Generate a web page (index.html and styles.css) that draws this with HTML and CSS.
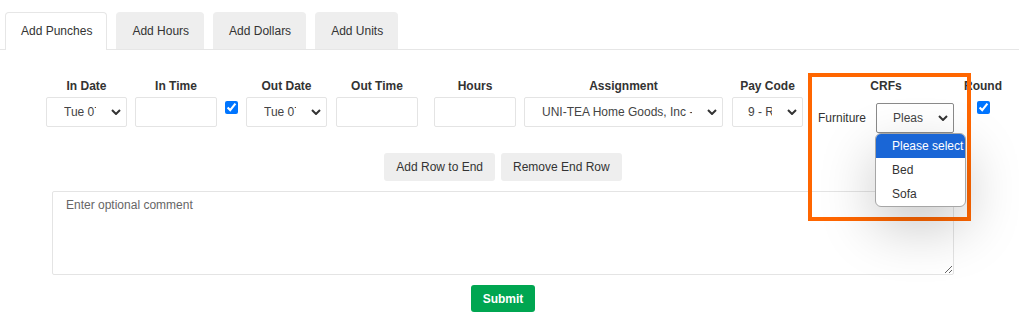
FILE: index.html
```html
<!DOCTYPE html>
<html>
<head>
  <meta charset="utf-8">
  <title>Add Punches</title>
  <link rel="stylesheet" href="styles.css">
</head>
<body>

  <div class="tabs">
    <div class="tab tab-active">Add Punches</div>
    <div class="tab">Add Hours</div>
    <div class="tab">Add Dollars</div>
    <div class="tab">Add Units</div>
  </div>

  <form class="punch-form">
    <div class="entry-row">
      <div class="field">
        <div class="field-label">In Date</div>
        <div class="select select-date">
          <span class="select-text">Tue 07/15/2025</span>
          <svg class="chevron" width="10" height="6" viewBox="0 0 10 6"><polyline points="1,1 5,5 9,1"/></svg>
        </div>
      </div>
      <div class="field">
        <div class="field-label">In Time</div>
        <input class="text-input" type="text">
      </div>
      <div class="field">
        <div class="field-label">&nbsp;</div>
        <input class="check" type="checkbox" checked>
      </div>
      <div class="field">
        <div class="field-label">Out Date</div>
        <div class="select select-date">
          <span class="select-text">Tue 07/15/2025</span>
          <svg class="chevron" width="10" height="6" viewBox="0 0 10 6"><polyline points="1,1 5,5 9,1"/></svg>
        </div>
      </div>
      <div class="field gap-9">
        <div class="field-label">Out Time</div>
        <input class="text-input" type="text">
      </div>
      <div class="field gap-16">
        <div class="field-label">Hours</div>
        <input class="text-input" type="text">
      </div>
      <div class="field">
        <div class="field-label">Assignment</div>
        <div class="select select-assignment">
          <span class="select-text">UNI-TEA Home Goods, Inc - Warehouse</span>
          <svg class="chevron" width="10" height="6" viewBox="0 0 10 6"><polyline points="1,1 5,5 9,1"/></svg>
        </div>
      </div>
      <div class="field gap-9">
        <div class="field-label">Pay Code</div>
        <div class="select select-paycode">
          <span class="select-text">9 - Regular</span>
          <svg class="chevron" width="10" height="6" viewBox="0 0 10 6"><polyline points="1,1 5,5 9,1"/></svg>
        </div>
      </div>
      <div class="field field-crfs gap-10">
        <div class="field-label">CRFs</div>
        <div class="crf-line">
          <span class="crf-name">Furniture</span>
          <div class="select select-crf">
            <span class="select-text">Please select</span>
            <svg class="chevron" width="10" height="6" viewBox="0 0 10 6"><polyline points="1,1 5,5 9,1"/></svg>
          </div>
        </div>
      </div>
      <div class="field gap-5">
        <div class="field-label">Round</div>
        <input class="check" type="checkbox" checked>
      </div>
    </div>

    <div class="form-body">
      <div class="row-actions">
        <button type="button" class="btn">Add Row to End</button>
        <button type="button" class="btn">Remove End Row</button>
      </div>
      <textarea class="comment" placeholder="Enter optional comment"></textarea>
      <div class="submit-row">
        <button type="button" class="btn-submit">Submit</button>
      </div>
    </div>
  </form>

  <!-- highlight round the CRFs column -->
  <div class="highlight"></div>

  <!-- open list of the Furniture select -->
  <ul class="dropdown">
    <li class="option option-selected">Please select</li>
    <li class="option">Bed</li>
    <li class="option">Sofa</li>
  </ul>

</body>
</html>
```

FILE: styles.css
```css
body {
    margin: 0;
    font-family: "Liberation Sans", Arial, sans-serif;
    font-size: 12px;
    color: #333333;
    background: #ffffff;
}

/* tabs */
.tabs {
    display: flex;
    align-items: flex-end;
    gap: 9px;
    padding: 12px 0 0 5px;
    border-bottom: 1px solid #e6e6e6;
}

.tab {
    height: 37px;
    line-height: 36px;
    padding: 0 14px 0 15px;
    box-sizing: border-box;
    background: #eeeeee;
    border: 1px solid #eeeeee;
    border-bottom: none;
    border-radius: 4px 4px 0 0;
}

.tab-active {
    height: 38px;
    margin-bottom: -1px;
    background: #ffffff;
    border-color: #e6e6e6;
}

/* entry row */
.entry-row {
    display: flex;
    padding-left: 46px;
    margin-top: 28px;
}

.field {
    display: flex;
    flex-direction: column;
    align-items: center;
    margin-left: 8px;
}

.field:first-child { margin-left: 0; }
.gap-5 { margin-left: 5px; }
.gap-9 { margin-left: 9px; }
.gap-10 { margin-left: 10px; }
.gap-16 { margin-left: 16px; }

.field-label {
    height: 16px;
    line-height: 16px;
    margin-bottom: 3px;
    font-weight: bold;
    white-space: nowrap;
}

.select {
    display: flex;
    align-items: center;
    height: 30px;
    box-sizing: border-box;
    padding: 0 5px 0 17px;
    border: 1px solid #e4e4e4;
    border-radius: 2px;
    background: #ffffff;
    color: #444444;
}

.select-text {
    flex: 1;
    overflow: hidden;
    white-space: nowrap;
}

.chevron {
    flex: none;
    margin-left: 15px;
    fill: none;
    stroke: #333333;
    stroke-width: 2;
}

.select-date { width: 81px; }
.select-assignment { width: 199px; }
.select-paycode { width: 71px; padding-left: 15px; }

.text-input {
    width: 82px;
    height: 30px;
    margin: 0;
    box-sizing: border-box;
    border: 1px solid #e4e4e4;
    border-radius: 2px;
}

.check {
    width: 13px;
    height: 13px;
    margin: 4px 0 0 0;
}

/* CRFs column */
.field-crfs { width: 146px; }

.crf-line {
    display: flex;
    align-items: center;
    margin-top: 6px;
}

.crf-name { margin-right: 10px; }

.select-crf {
    width: 78px;
    padding-left: 16px;
    border-color: #8a8a8a;
}

/* lower part of the form */
.form-body {
    width: 902px;
    margin: 20px 0 0 52px;
}

.row-actions {
    display: flex;
    justify-content: center;
    gap: 6px;
}

.btn {
    height: 28px;
    padding: 0 12px;
    border: none;
    border-radius: 3px;
    background: #eeeeee;
    color: #333333;
    font-family: inherit;
    font-size: 12px;
}

.comment {
    display: block;
    width: 902px;
    height: 84px;
    margin-top: 10px;
    padding: 6px 13px;
    box-sizing: border-box;
    border: 1px solid #e4e4e4;
    border-radius: 2px;
    font-family: inherit;
    font-size: 12px;
}

.comment::placeholder { color: #666666; }

.submit-row {
    display: flex;
    justify-content: center;
    margin-top: 10px;
}

.btn-submit {
    height: 27px;
    padding: 0 12px;
    border: none;
    border-radius: 3px;
    background: #00a651;
    color: #ffffff;
    font-family: inherit;
    font-size: 12px;
    font-weight: bold;
}

/* overlays */
.highlight {
    position: absolute;
    left: 808px;
    top: 73px;
    width: 163px;
    height: 148px;
    box-sizing: border-box;
    border: 4px solid #ff6600;
}

.dropdown {
    position: absolute;
    left: 875px;
    top: 133px;
    width: 91px;
    margin: 0;
    padding: 0;
    list-style: none;
    box-sizing: border-box;
    border: 1px solid #a6a6a6;
    border-radius: 6px;
    overflow: hidden;
    background: #ffffff;
    box-shadow: 0 20px 55px rgba(0, 0, 0, 0.22);
}

.option {
    height: 24px;
    line-height: 24px;
    padding-left: 16px;
    white-space: nowrap;
    color: #333333;
}

.option-selected {
    background: #1a66d6;
    color: #ffffff;
}
```
